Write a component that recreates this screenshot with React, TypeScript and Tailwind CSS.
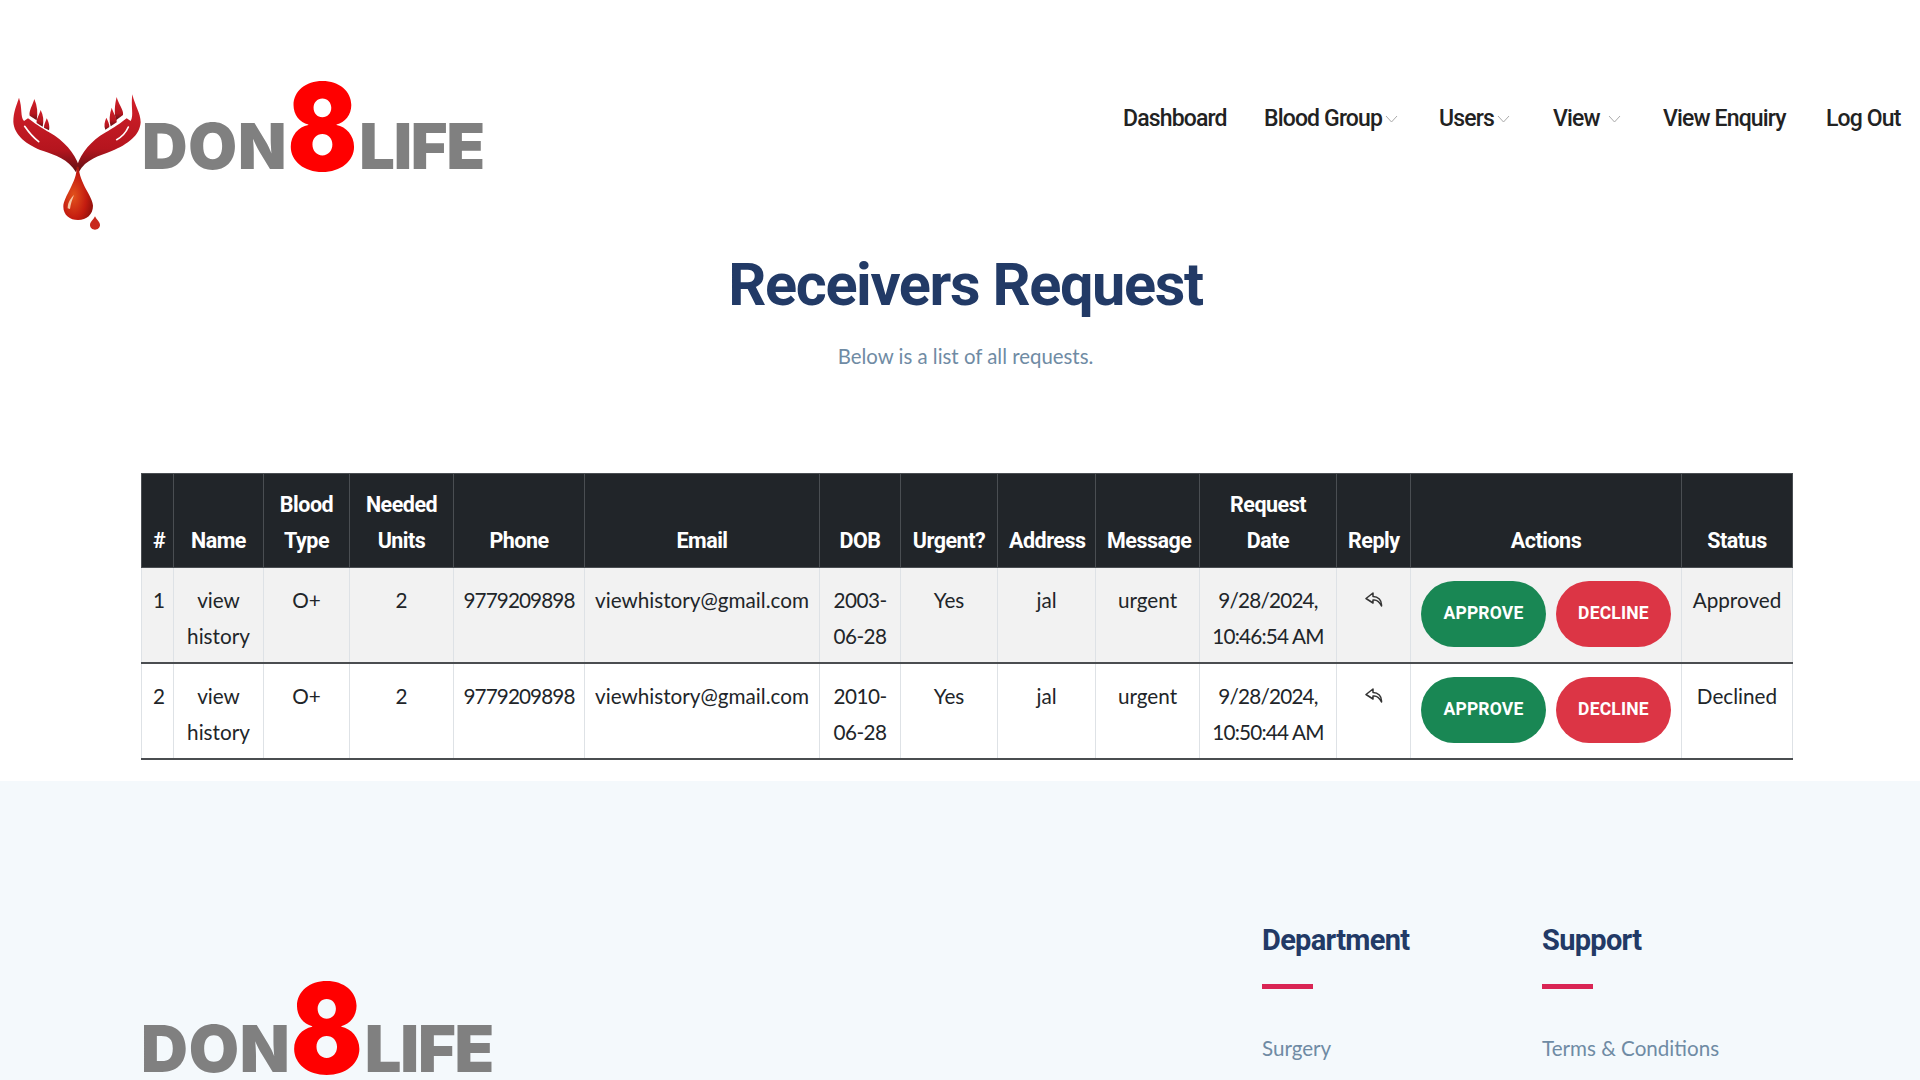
const rows = [
  { id: 1, dob: ['2003-', '06-28'], date: ['9/28/2024,', '10:46:54 AM'], status: 'Approved' },
  { id: 2, dob: ['2010-', '06-28'], date: ['9/28/2024,', '10:50:44 AM'], status: 'Declined' },
]

const headFont = "font-['Roboto',sans-serif]"

function Wordmark() {
  return (
    <div className="flex items-baseline font-['Inter',sans-serif] font-black leading-none text-[#808080]">
      <span className="-translate-y-[2px] text-[63px] tracking-[0.8px]">DON</span>
      <span className="text-[122px] leading-[0.76] text-[#ff0000] ml-[4px] mr-[6px] w-[62px] flex justify-center">
        <span className="inline-block scale-x-[0.85]">8</span>
      </span>
      <span className="-translate-y-[2px] text-[63px] tracking-[-1.2px]">LIFE</span>
    </div>
  )
}

function HandsLogo() {
  return (
    <svg width="160" height="150" viewBox="0 0 480 450">
      <defs>
        <linearGradient id="hand" x1="0" y1="0" x2="0" y2="1">
          <stop offset="0" stopColor="#d2202a" />
          <stop offset="0.7" stopColor="#b5151e" />
          <stop offset="1" stopColor="#5e1014" />
        </linearGradient>
        <radialGradient id="drop" cx="0.35" cy="0.55" r="0.7">
          <stop offset="0" stopColor="#e2521c" />
          <stop offset="0.6" stopColor="#c41c10" />
          <stop offset="1" stopColor="#8c0f0c" />
        </radialGradient>
      </defs>
      <g fill="url(#hand)">
        <path d="M57 38 C50 60 40 80 40 110 C42 150 80 180 130 198 C165 210 205 222 228 262 L236 240 C225 205 190 165 150 143 C125 130 100 112 84 100 L72 108 C60 95 68 70 57 38 Z" />
        <path d="M103 42 C98 60 86 78 89 92 L110 106 C114 85 112 62 103 42 Z" />
        <path d="M122 75 C118 90 108 103 110 114 L128 125 C132 108 130 90 122 75 Z" />
        <path d="M140 100 C137 110 131 120 132 128 L147 136 C150 125 146 110 140 100 Z" />
        <path d="M397 28 C404 60 422 85 422 112 C420 150 385 178 335 198 C295 214 258 222 236 262 L232 240 C242 205 275 165 315 143 C340 130 365 112 380 100 L392 108 C402 92 392 65 397 28 Z" />
        <path d="M350 36 C356 58 372 76 369 90 L348 106 C342 85 344 60 350 36 Z" />
        <path d="M335 68 C340 85 352 98 350 112 L332 124 C327 108 328 88 335 68 Z" />
        <path d="M319 98 C324 108 329 118 328 126 L316 134 C311 122 314 110 319 98 Z" />
      </g>
      <path d="M74 124 C85 140 100 158 116 170" stroke="#fff" strokeWidth="5" fill="none" strokeLinecap="round" />
      <path d="M385 126 C378 142 365 156 350 164" stroke="#fff" strokeWidth="5" fill="none" strokeLinecap="round" />
      <path d="M230 245 C232 290 190 335 190 365 C190 390 210 405 234 405 C260 405 279 388 279 362 C279 335 238 295 236 245 Z" fill="url(#drop)" />
      <path d="M203 370 C203 350 214 338 222 330 C216 345 212 358 210 372 Z" fill="#f6c9a8" />
      <path d="M285 394 C280 405 270 410 270 420 C270 428 277 434 285 434 C293 434 300 428 300 420 C300 410 290 405 285 394 Z" fill="#c8281c" />
    </svg>
  )
}

function Chevron({ className }: { className: string }) {
  return (
    <svg className={className} width="13" height="8" viewBox="0 0 13 8" fill="none" stroke="#aaa" strokeWidth="1">
      <path d="M1 1 L6.5 7 L12 1" />
    </svg>
  )
}

function ReplyIcon() {
  return (
    <svg className="mx-auto mt-[9px]" width="18" height="15" viewBox="0 0 18 15" fill="none" stroke="#333" strokeWidth="1.5" strokeLinejoin="round">
      <path d="M8 1 L1 6.5 L8 11 V8 C11.5 7.5 14.5 9.5 16.5 14 C17 8 13 4.5 8 4.5 Z" />
    </svg>
  )
}

const thClass = `border border-[#4a4e52] px-[11px] pt-[13px] pb-[9px] align-bottom text-center text-[21.5px] font-bold leading-[35.5px] tracking-[-0.5px] text-white ${headFont}`
const tdClass = 'border-x border-[#dee2e6] px-[11px] pt-[15px] pb-[8px] align-top text-center'

export default function App() {
  return (
    <div className="w-[1920px] h-[1080px] overflow-hidden bg-white font-['Lato',sans-serif] text-[20.7px] leading-[35.5px] text-[#212529]">
      {/* Header */}
      <header className="flex h-[236px] justify-between">
        <div className="flex items-start pt-[81px]">
          <div className="mt-[4px] w-[142px]">
            <HandsLogo />
          </div>
          <Wordmark />
        </div>
        <nav className={`flex items-start pt-[101px] text-[23px] font-medium tracking-[-0.85px] text-[#222] ${headFont}`}>
          <span className="w-[141px] ">Dashboard</span>
          <span className="flex w-[175px] items-center">Blood Group<Chevron className="ml-[3px] mt-[1px]" /></span>
          <span className="flex w-[114px] items-center">Users<Chevron className="ml-[3px] mt-[1px]" /></span>
          <span className="flex w-[110px] items-center">View<Chevron className="ml-[8px] mt-[1px]" /></span>
          <span className="w-[163px]">View Enquiry</span>
          <span className="w-[94px]">Log Out</span>
        </nav>
      </header>

      {/* Title */}
      <section className="h-[237px] pl-[11px] text-center">
        <h1 className={`pt-[16px] text-[59.5px] font-bold leading-[66px] tracking-[-1.4px] text-[#223a66] ${headFont}`}>Receivers Request</h1>
        <p className="mt-[22px] text-[20.4px] leading-[32px] text-[#6f8ba4]">Below is a list of all requests.</p>
      </section>

      {/* Table */}
      <div className="ml-[141px] w-[1651px]">
        <table className="w-full table-fixed">
          <colgroup>
            <col className="w-[32px]" />
            <col className="w-[90px]" />
            <col className="w-[86px]" />
            <col className="w-[104px]" />
            <col className="w-[131px]" />
            <col className="w-[235px]" />
            <col className="w-[81px]" />
            <col className="w-[97px]" />
            <col className="w-[98px]" />
            <col className="w-[104px]" />
            <col className="w-[137px]" />
            <col className="w-[74px]" />
            <col className="w-[271px]" />
            <col className="w-[111px]" />
          </colgroup>
          <thead className="bg-[#212529]">
            <tr>
              <th className={thClass}>#</th>
              <th className={thClass}>Name</th>
              <th className={thClass}>Blood Type</th>
              <th className={thClass}>Needed Units</th>
              <th className={thClass}>Phone</th>
              <th className={thClass}>Email</th>
              <th className={thClass}>DOB</th>
              <th className={thClass}>Urgent?</th>
              <th className={thClass}>Address</th>
              <th className={thClass}>Message</th>
              <th className={thClass}>Request Date</th>
              <th className={thClass}>Reply</th>
              <th className={thClass}>Actions</th>
              <th className={thClass}>Status</th>
            </tr>
          </thead>
          <tbody>
            {rows.map((row) => (
              <tr key={row.id} className={`border-b-2 border-[#4a4d50] ${row.id === 1 ? 'bg-[#f2f2f2]' : 'bg-white'}`}>
                <td className={tdClass}>{row.id}</td>
                <td className={tdClass}>view history</td>
                <td className={tdClass}>O+</td>
                <td className={tdClass}>2</td>
                <td className={`${tdClass} !px-0 tracking-[-0.9px]`}>9779209898</td>
                <td className={`${tdClass} !px-0`}>viewhistory@gmail.com</td>
                <td className={`${tdClass} !px-0 tracking-[-0.5px]`}>{row.dob[0]}<br />{row.dob[1]}</td>
                <td className={tdClass}>Yes</td>
                <td className={tdClass}>jal</td>
                <td className={tdClass}>urgent</td>
                <td className={`${tdClass} !px-0 tracking-[-0.8px]`}>{row.date[0]}<br />{row.date[1]}</td>
                <td className={tdClass}><ReplyIcon /></td>
                <td className={`${tdClass} !pt-[13px] !pb-[10px] !px-[10px]`}>
                  <div className={`flex gap-[10px] text-[17.5px] font-bold leading-none tracking-[0.2px] text-white ${headFont}`}>
                    <button className="flex h-[66px] w-[125px] items-center justify-center rounded-full bg-[#198754] uppercase">Approve</button>
                    <button className="flex h-[66px] w-[115px] items-center justify-center rounded-full bg-[#dc3545] uppercase">Decline</button>
                  </div>
                </td>
                <td className={`${tdClass} !px-0`}>{row.status}</td>
              </tr>
            ))}
          </tbody>
        </table>
      </div>

      {/* Footer */}
      <footer className="mt-[21px] flex h-[301px] bg-[#f4f9fc] pl-[141px] text-[#6f8ba4]">
        <div className="w-[1121px] pt-[203px]">
          <div className="origin-bottom-left scale-[1.03]">
            <Wordmark />
          </div>
        </div>
        <div className="w-[280px] pt-[140px]">
          <h4 className={`text-[29px] font-bold leading-[38px] tracking-[-0.7px] text-[#223a66] ${headFont}`}>Department</h4>
          <div className="mt-[25px] h-[5px] w-[51px] bg-[#d92554]" />
          <p className="mt-[41px] text-[20.6px] leading-[36px]">Surgery</p>
        </div>
        <div className="pt-[140px]">
          <h4 className={`text-[29px] font-bold leading-[38px] tracking-[-0.7px] text-[#223a66] ${headFont}`}>Support</h4>
          <div className="mt-[25px] h-[5px] w-[51px] bg-[#d92554]" />
          <p className="mt-[41px] text-[20.6px] leading-[36px]">Terms &amp; Conditions</p>
        </div>
      </footer>
    </div>
  )
}
